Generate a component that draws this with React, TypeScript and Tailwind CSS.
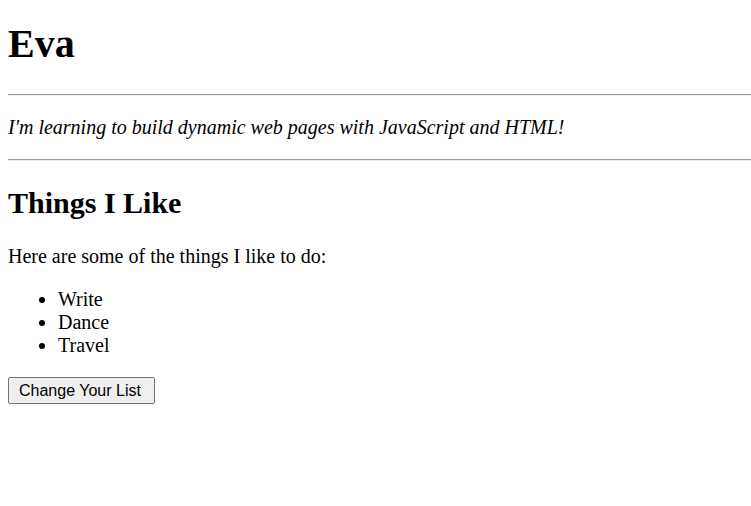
import React from 'react';

const likes = ['Write', 'Dance', 'Travel'];

export default function App() {
  return (
    <div className="min-h-[506px] bg-white pl-2 pt-[21px] text-black text-[20px] font-['Liberation_Serif','Times_New_Roman',serif]">
      <h1 className="text-[40px] leading-[46px] font-bold">Eva</h1>
      <hr className="mt-[27px] border-0 border-t border-b border-t-[#9a9a9a] border-b-[#eeeeee]" />
      <p className="mt-5 italic leading-[23px]">
        I'm learning to build dynamic web pages with JavaScript and HTML!
      </p>
      <hr className="mt-5 border-0 border-t border-b border-t-[#9a9a9a] border-b-[#eeeeee]" />
      <h2 className="mt-[25px] text-[30px] leading-[34.5px] font-bold">Things I Like</h2>
      <p className="mt-6 leading-[23px]">Here are some of the things I like to do:</p>
      <ul className="mt-5 list-disc pl-[50px] leading-[23px]">
        {likes.map((item) => (
          <li key={item}>{item}</li>
        ))}
      </ul>
      <button className="mt-5 h-[27px] w-[147px] rounded-[2px] border border-[#767676] bg-[#efefef] px-[10px] pt-px text-left text-[16px] leading-none text-black font-['Liberation_Sans',Arial,sans-serif]">
        Change Your List
      </button>
    </div>
  );
}
